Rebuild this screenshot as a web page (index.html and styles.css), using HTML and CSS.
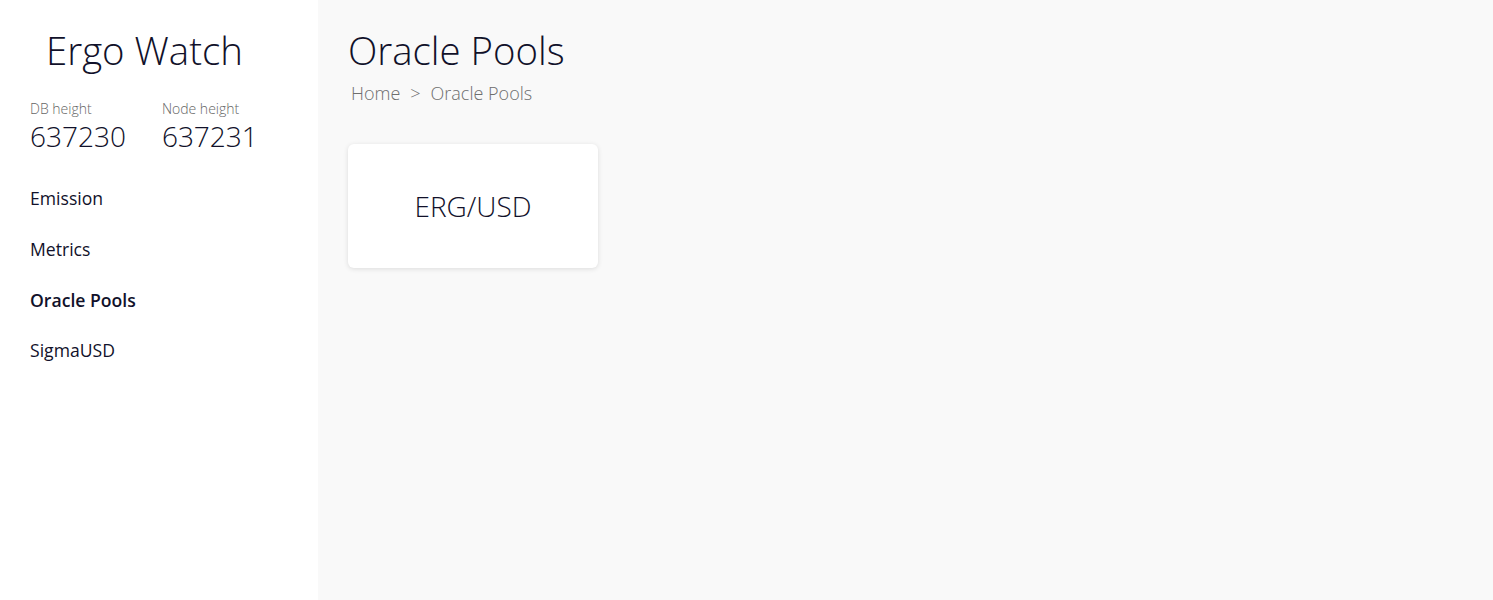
FILE: index.html
```html
<!DOCTYPE html>
<html>
<head>
<meta charset="utf-8">
<link rel="stylesheet" href="styles.css">
</head>
<body>
<div class="app">
  <aside class="sidebar">
    <div class="brand">Ergo Watch</div>
    <div class="heights">
      <div class="height">
        <div class="height-label">DB height</div>
        <div class="height-value">637230</div>
      </div>
      <div class="height">
        <div class="height-label">Node height</div>
        <div class="height-value">637231</div>
      </div>
    </div>
    <nav class="nav">
      <a class="nav-item">Emission</a>
      <a class="nav-item">Metrics</a>
      <a class="nav-item active">Oracle Pools</a>
      <a class="nav-item">SigmaUSD</a>
    </nav>
  </aside>
  <main class="main">
    <h1 class="title">Oracle Pools</h1>
    <div class="breadcrumb"><span>Home</span><span class="sep">&gt;</span><span>Oracle Pools</span></div>
    <div class="cards">
      <div class="card">ERG/USD</div>
    </div>
  </main>
</div>
</body>
</html>
```
FILE: styles.css
```css
html, body {
  margin: 0;
  padding: 0;
  height: 100%;
}
body {
  font-family: "Open Sans", sans-serif;
  color: #11112a;
  background: #f9f9f9;
}
.app {
  display: flex;
  min-height: 600px;
}
.sidebar {
  width: 318px;
  flex-shrink: 0;
  background: #ffffff;
  padding: 0 30px;
  box-sizing: border-box;
}
.brand {
  font-size: 38.4px;
  font-weight: 300;
  line-height: 1;
  padding: 31px 0 0 16px;
}
.heights {
  display: flex;
  gap: 36px;
  margin-top: 30px;
}
.height-label {
  font-size: 14px;
  font-weight: 300;
  color: #666;
  line-height: 20px;
}
.height-value {
  font-size: 28px;
  font-weight: 300;
  line-height: 34px;
}
.nav {
  display: flex;
  flex-direction: column;
  margin-top: 20px;
}
.nav-item {
  font-size: 17.6px;
  line-height: 25px;
  padding: 13px 0 12.67px;
  color: #11112a;
}
.nav-item.active {
  font-weight: 600;
}
.main {
  flex: 1;
  padding: 0 30px;
}
.title {
  margin: 0;
  font-size: 38.4px;
  font-weight: 300;
  line-height: 1;
  padding-top: 31px;
}
.breadcrumb {
  margin-top: 12px;
  margin-left: 3px;
  font-size: 18px;
  font-weight: 300;
  color: #6e6e6e;
  display: flex;
  gap: 10px;
}
.cards {
  margin-top: 39px;
  display: flex;
  gap: 20px;
}
.card {
  width: 250px;
  height: 124px;
  background: #fff;
  border-radius: 6px;
  box-shadow: 0 1px 5px rgba(0,0,0,0.12);
  display: flex;
  align-items: center;
  justify-content: center;
  font-size: 28px;
  font-weight: 300;
}
```
